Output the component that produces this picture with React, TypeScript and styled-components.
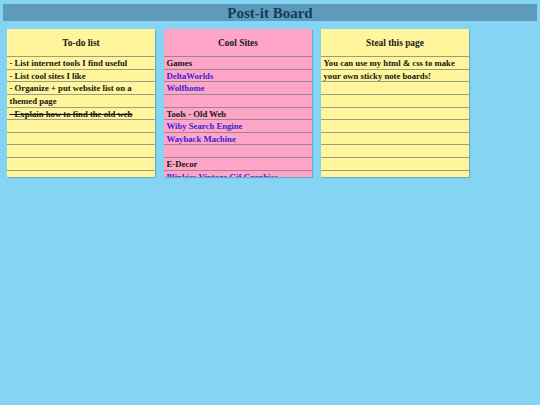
import React from "react";
import styled, { createGlobalStyle } from "styled-components";

const Global = createGlobalStyle`
  html, body { margin: 0; padding: 0; background: #85d4f3; }
  body { font-family: "Liberation Serif", "Times New Roman", serif; }
`;

const Page = styled.div`
  padding: 4px 3px;
  min-height: 397px;
  background: #85d4f3;
`;

const TitleBar = styled.h1`
  margin: 0;
  height: 17px;
  background: #5e9bb8;
  color: #163a5e;
  font-size: 15px;
  line-height: 18px;
  font-weight: bold;
  text-align: center;
`;

const Board = styled.div`
  display: flex;
  gap: 9px;
  margin: 8px 0 0 4px;
  align-items: flex-start;
`;

const Note = styled.div<{ $color: string }>`
  width: 148px;
  height: 148px;
  overflow: hidden;
  background: ${(p) => p.$color};
  box-shadow: 1px 1px 1px rgba(0, 0, 0, 0.18);
  display: flex;
  flex-direction: column;
`;

const NoteTitle = styled.div`
  height: 28px;
  flex: none;
  display: flex;
  align-items: center;
  justify-content: center;
  border-bottom: 1px solid rgba(110, 120, 120, 0.7);
  box-sizing: border-box;
  font-size: 9.4px;
  font-weight: bold;
  color: #1a1a1a;
  padding-top: 1px;
`;

const NoteBody = styled.div`
  flex: 1;
  padding: 0 3px 0 2.5px;
  font-size: 8.7px;
  font-weight: bold;
  line-height: 12.63px;
  color: #141414;
  background-image: repeating-linear-gradient(
    to bottom,
    transparent 0,
    transparent 11.63px,
    rgba(110, 120, 120, 0.7) 11.63px,
    rgba(110, 120, 120, 0.7) 12.63px
  );
`;

const Line = styled.div<{ $strike?: boolean }>`
  min-height: 12.63px;
  text-decoration: ${(p) => (p.$strike ? "line-through" : "none")};
`;

const Link = styled.a`
  display: block;
  min-height: 12.63px;
  color: #3a24d8;
  text-decoration: none;
`;

export default function App() {
  return (
    <>
      <Global />
      <Page>
        <TitleBar>Post-it Board</TitleBar>
        <Board>
          <Note $color="#fff59c">
            <NoteTitle>To-do list</NoteTitle>
            <NoteBody>
              <Line>- List internet tools I find useful</Line>
              <Line>- List cool sites I like</Line>
              <Line>- Organize + put website list on a themed page</Line>
              <Line $strike>- Explain how to find the old web</Line>
            </NoteBody>
          </Note>
          <Note $color="#ffa5c8">
            <NoteTitle>Cool Sites</NoteTitle>
            <NoteBody>
              <Line>Games</Line>
              <Link href="#">DeltaWorlds</Link>
              <Link href="#">Wolfhome</Link>
              <Line />
              <Line>Tools - Old Web</Line>
              <Link href="#">Wiby Search Engine</Link>
              <Link href="#">Wayback Machine</Link>
              <Line />
              <Line>E-Decor</Line>
              <Link href="#">Blinkies Vintage Gif Graphics</Link>
            </NoteBody>
          </Note>
          <Note $color="#fff59c">
            <NoteTitle>Steal this page</NoteTitle>
            <NoteBody>
              <Line>You can use my html &amp; css to make your own sticky note boards!</Line>
            </NoteBody>
          </Note>
        </Board>
      </Page>
    </>
  );
}
